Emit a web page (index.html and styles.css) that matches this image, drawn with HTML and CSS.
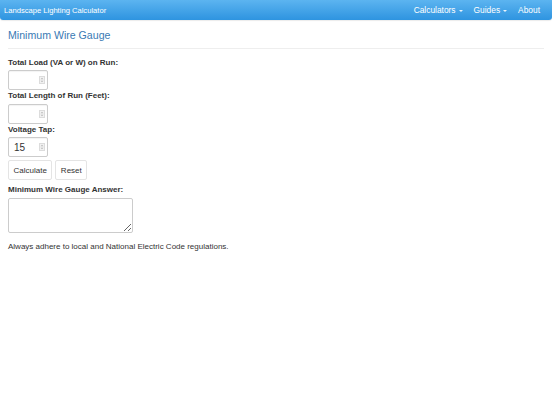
FILE: index.html
```html
<!DOCTYPE html>
<html lang="en">
<head>
<meta charset="utf-8">
<title>Minimum Wire Gauge</title>
<link rel="stylesheet" href="styles.css">
</head>
<body>
<nav class="navbar">
  <a class="brand" href="#">Landscape Lighting Calculator</a>
  <ul class="nav">
    <li><a href="#">Calculators <span class="caret"></span></a></li>
    <li><a href="#">Guides <span class="caret"></span></a></li>
    <li><a href="#">About</a></li>
  </ul>
</nav>
<main class="container">
  <h1 class="title">Minimum Wire Gauge</h1>
  <form class="calc">
    <label class="lbl" for="load">Total Load (VA or W) on Run:</label>
    <div class="num">
      <input id="load" class="num-input" type="text" value="">
      <svg class="spin" width="6" height="8" viewBox="0 0 6 8"><rect x="0.5" y="0.5" width="5" height="7" fill="#f2f2f2" stroke="#dcdcdc"/><path d="M1.6 3.2L3 1.8L4.4 3.2Z M1.6 4.8L3 6.2L4.4 4.8Z" fill="#b8b8b8"/></svg>
    </div>
    <label class="lbl" for="len">Total Length of Run (Feet):</label>
    <div class="num">
      <input id="len" class="num-input" type="text" value="">
      <svg class="spin" width="6" height="8" viewBox="0 0 6 8"><rect x="0.5" y="0.5" width="5" height="7" fill="#f2f2f2" stroke="#dcdcdc"/><path d="M1.6 3.2L3 1.8L4.4 3.2Z M1.6 4.8L3 6.2L4.4 4.8Z" fill="#b8b8b8"/></svg>
    </div>
    <label class="lbl" for="tap">Voltage Tap:</label>
    <div class="num">
      <input id="tap" class="num-input" type="text" value="15">
      <svg class="spin" width="6" height="8" viewBox="0 0 6 8"><rect x="0.5" y="0.5" width="5" height="7" fill="#f2f2f2" stroke="#dcdcdc"/><path d="M1.6 3.2L3 1.8L4.4 3.2Z M1.6 4.8L3 6.2L4.4 4.8Z" fill="#b8b8b8"/></svg>
    </div>
    <div class="buttons">
      <button type="button" class="btn">Calculate</button>
      <button type="reset" class="btn">Reset</button>
    </div>
    <label class="lbl" for="answer">Minimum Wire Gauge Answer:</label>
    <textarea id="answer" class="answer"></textarea>
  </form>
  <p class="note">Always adhere to local and National Electric Code regulations.</p>
</main>
</body>
</html>
```
FILE: styles.css
```css
html, body {
  margin: 0;
  padding: 0;
  background: #fff;
}
body {
  font-family: "Liberation Sans", Arial, Helvetica, sans-serif;
  font-size: 8px;
  color: #333;
}
.navbar {
  display: flex;
  align-items: center;
  justify-content: space-between;
  height: 20px;
  background: linear-gradient(to bottom, #5cb4f0 0%, #2e94e0 100%);
  border-radius: 0 0 3px 3px;
  box-shadow: 0 1px 1px rgba(0,0,0,0.08);
}
.brand {
  color: #fff;
  text-decoration: none;
  font-size: 7.6px;
  padding-left: 4px;
}
.nav {
  display: flex;
  list-style: none;
  margin: 0;
  padding: 0 12px 0 0;
  gap: 11px;
}
.nav a {
  color: #fff;
  text-decoration: none;
  font-size: 8.4px;
  display: flex;
  align-items: center;
  gap: 3px;
}
.caret {
  display: inline-block;
  width: 0;
  height: 0;
  border-left: 2px solid transparent;
  border-right: 2px solid transparent;
  border-top: 2px solid #e8f3fc;
  margin-top: 1px;
}
.container {
  padding: 0 8px;
}
.title {
  font-size: 10.6px;
  font-weight: normal;
  color: #3a7ab4;
  margin: 0;
  padding: 9px 0 7px;
  line-height: 12px;
  border-bottom: 1px solid #eee;
}
.calc {
  display: flex;
  flex-direction: column;
  align-items: flex-start;
  margin-top: 8.5px;
}
.lbl {
  font-weight: bold;
  font-size: 8px;
  line-height: 10px;
  margin-bottom: 2.5px;
}
.num {
  display: flex;
  align-items: center;
  width: 38px;
  height: 18px;
  border: 1px solid #ccc;
  border-radius: 2px;
  margin-bottom: 1px;
  box-shadow: inset 0 1px 1px rgba(0,0,0,0.05);
}
.num-input {
  width: 24px;
  border: 0;
  outline: none;
  padding: 0 0 0 5px;
  margin: 0;
  font-family: inherit;
  font-size: 10px;
  color: #333;
  background: transparent;
}
.spin {
  display: block;
  margin-left: 1px;
}
.buttons {
  display: flex;
  gap: 3px;
  margin-top: 2px;
  margin-bottom: 5px;
}
.btn {
  font-family: inherit;
  font-size: 8px;
  color: #333;
  background: #fff;
  border: 1px solid #e4e4e4;
  border-radius: 2px;
  height: 20px;
  padding: 0 4.5px;
  margin: 0;
}
.answer {
  width: 121px;
  height: 31px;
  border: 1px solid #ccc;
  border-radius: 2px;
  padding: 1px;
  margin: 0;
  resize: both;
  font-family: inherit;
}
.note {
  margin: 9px 0 0;
  font-size: 8px;
  line-height: 10px;
}
```
